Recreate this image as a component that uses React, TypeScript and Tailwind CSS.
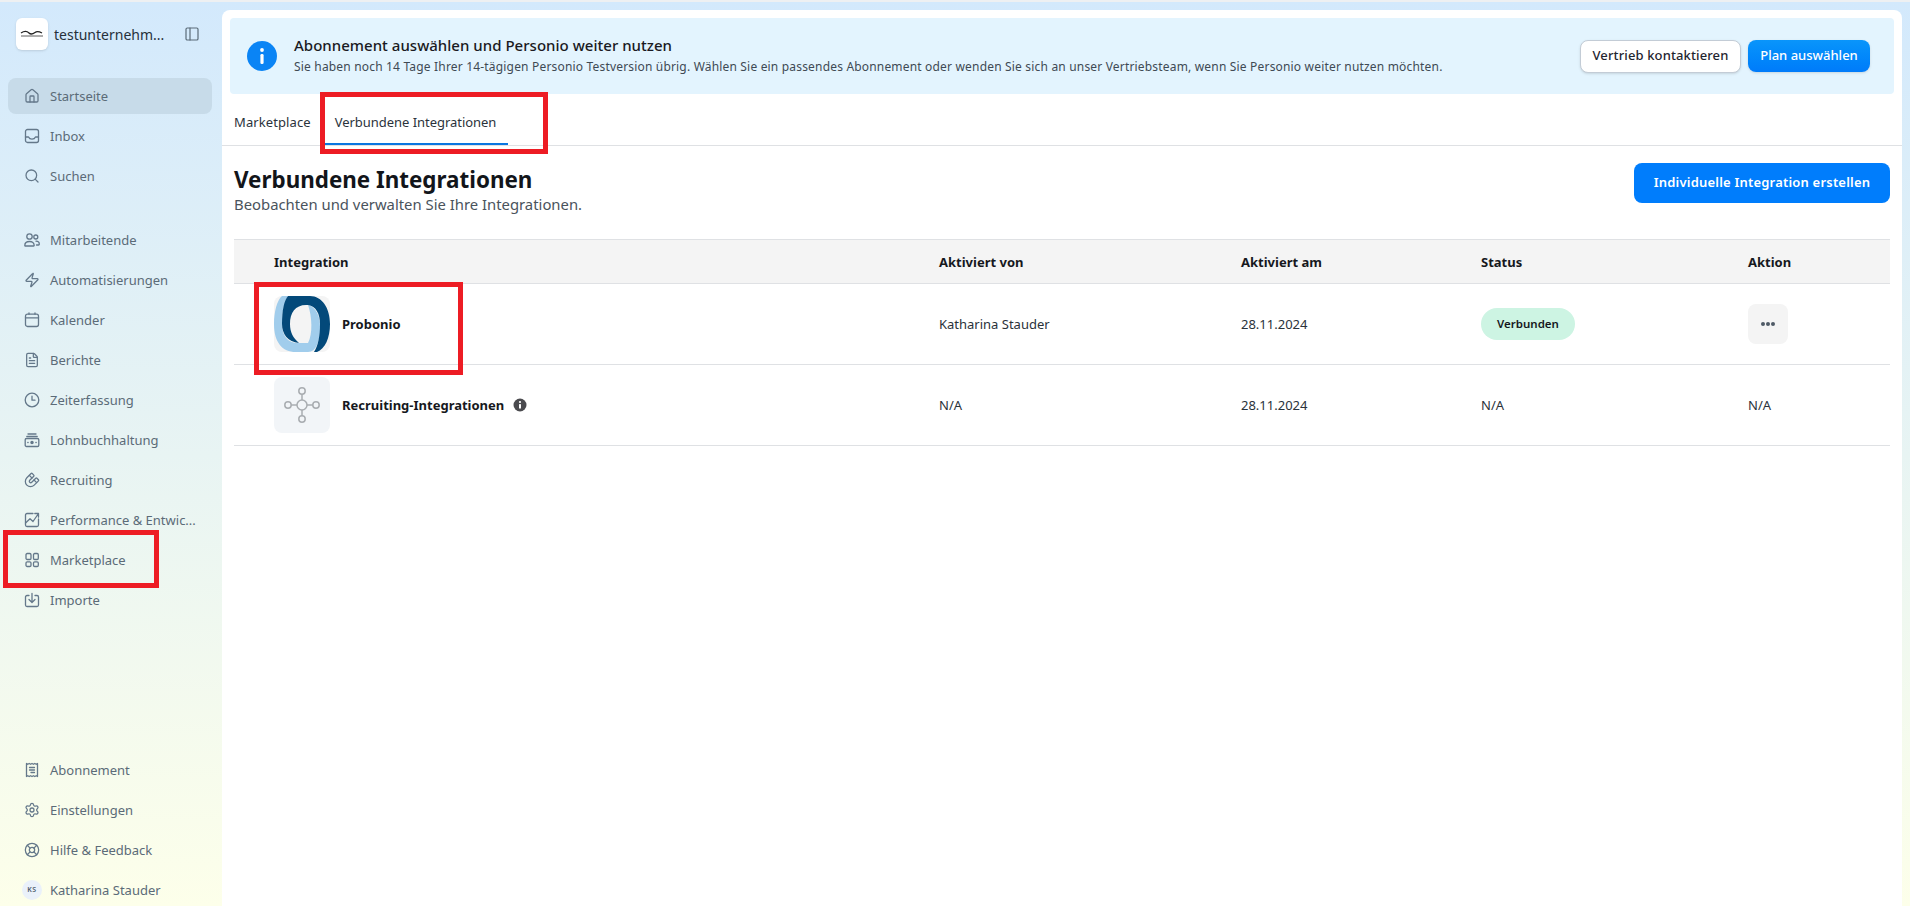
import { House, Search, Zap, FileText, Settings, LifeBuoy, PanelLeft, Magnet } from "lucide-react";
import type { ReactNode } from "react";

const ic = "w-[16px] h-[16px] shrink-0";
const svgProps = { viewBox: "0 0 16 16", fill: "none", stroke: "currentColor", strokeWidth: 1.3, strokeLinecap: "round" as const, strokeLinejoin: "round" as const, className: ic };

const InboxI = () => (<svg {...svgProps}><rect x="1.5" y="1.5" width="13" height="13" rx="2" /><path d="M1.5 9h3c.6 1.4 2 2.2 3.5 2.2s2.900-.8 3.500-2.200h3" /></svg>);
const UsersI = () => (<svg {...svgProps}><circle cx="5.5" cy="4.5" r="2.7" /><circle cx="11.8" cy="5" r="2" /><path d="M.8 13.5c0-2.600 2-4 4.700-4s4.700 1.400 4.700 4c0 .4-.3.5-.6.5H1.400c-.3 0-.6-.1-.6-.5zM12 9.200c2 0 3.300 1.200 3.300 3 0 .5-.3.8-.8.8h-2" /></svg>);
const CalI = () => (<svg {...svgProps}><rect x="1.5" y="2.2" width="13" height="12.3" rx="2" /><path d="M1.5 5.800h13M5 1v1.200M11 1v1.200" /></svg>);
const ClockI = () => (<svg {...svgProps}><circle cx="8" cy="8" r="6.8" /><path d="M8 4.200V8.200h3" /></svg>);
const PayI = () => (<svg {...svgProps}><rect x="1.2" y="6.5" width="13.6" height="8" rx="1.3" /><path d="M2.800 4.500h10.400M4 2h8" /><circle cx="8" cy="10.5" r="1.1" fill="currentColor" /><path d="M3.800 10.500h.3M11.900 10.500h.3" /></svg>);
const PerfI = () => (<svg {...svgProps}><path d="M9 1.500H3A1.500 1.500 0 0 0 1.500 3v10A1.500 1.500 0 0 0 3 14.500h10a1.500 1.500 0 0 0 1.500-1.500V7" /><path d="M1.500 11 6 6.800 9 9.500 14.500 1.500M10.800 1.500h3.700v3.700" /></svg>);
const GridI = () => (<svg {...svgProps}><rect x="2" y="1.5" width="5" height="6" rx="1.2" /><rect x="9.5" y="1.5" width="4.8" height="6" rx="1.2" /><rect x="2" y="9.8" width="5" height="4.7" rx="1.2" /><rect x="9.5" y="9.8" width="4.8" height="4.7" rx="1.2" /></svg>);
const ImportI = () => (<svg {...svgProps}><path d="M5 3.500H3A1.500 1.500 0 0 0 1.500 5v8A1.500 1.500 0 0 0 3 14.500h10a1.500 1.500 0 0 0 1.500-1.500V5A1.500 1.500 0 0 0 13 3.500h-2" /><path d="M8 1.500v8.500M5 7.500 8 10.500l3-3" /></svg>);
const ReceiptI = () => (<svg {...svgProps}><path d="M2.500 1.500l1.300.8 1.400-.8 1.400.8 1.400-.8 1.400.8 1.400-.8 1.400.8 1.300-.8v13l-1.300-.8-1.400.8-1.400-.8-1.400.8-1.400-.8-1.400.8-1.400-.8-1.300.8z" /><path d="M5.500 5.500h5M5.500 8h5M7 10.500h3.500" /></svg>);

function Row({ icon, label, active }: { icon: ReactNode; label: string; active?: boolean }) {
  return (
    <div className={`flex items-center h-9 pl-[16px] pr-2 gap-[10px] rounded-lg text-[#5b6b78] text-[13px] ${active ? "bg-[#c7dbe9]" : ""}`}>
      <span className="text-[#64788a] flex">{icon}</span>
      <span className="whitespace-nowrap pt-[2px]">{label}</span>
    </div>
  );
}

const cols = "grid grid-cols-[40px_665px_302px_240px_267px_1fr] items-center";

export default function App() {
  return (
    <div className="relative flex h-screen w-full overflow-hidden border-t-[2px] border-[#eef0f2] bg-gradient-to-b from-[#d3e9fc] via-[#e8f4f3] to-[#fdffea] font-['Noto_Sans',sans-serif] text-[#1a1a22]">
      <aside className="w-[222px] shrink-0 flex flex-col pt-4 pl-2 pr-[10px]">
        <div className="flex items-center h-8 pl-2">
          <div className="w-8 h-8 rounded-md bg-white shadow-sm flex items-center justify-center shrink-0">
            <svg viewBox="0 0 24 8" className="w-[24px] h-[8px]"><path d="M1 3c3-2 6-2 8 0s4 1 6-.5 4-1 7 .5" stroke="#222" strokeWidth="1.3" fill="none" /><path d="M1 6h22" stroke="#333" strokeWidth="0.8" /></svg>
          </div>
          <span className="ml-[6px] text-[14px] text-[#26303a] w-[122px] whitespace-nowrap">testunternehm...</span>
          <PanelLeft className="ml-[8px] w-4 h-4 text-[#5b6b78]" strokeWidth={1.8} />
        </div>

        <div className="mt-7 flex flex-col gap-1">
          <Row active icon={<House className={ic} strokeWidth={1.9} />} label="Startseite" />
          <Row icon={<InboxI />} label="Inbox" />
          <Row icon={<Search className={ic} strokeWidth={1.9} />} label="Suchen" />
        </div>

        <div className="mt-7 flex flex-col gap-1">
          <Row icon={<UsersI />} label="Mitarbeitende" />
          <Row icon={<Zap className={ic} strokeWidth={1.9} />} label="Automatisierungen" />
          <Row icon={<CalI />} label="Kalender" />
          <Row icon={<FileText className={ic} strokeWidth={1.9} />} label="Berichte" />
          <Row icon={<ClockI />} label="Zeiterfassung" />
          <Row icon={<PayI />} label="Lohnbuchhaltung" />
          <Row icon={<Magnet className={`${ic} rotate-180`} strokeWidth={1.9} />} label="Recruiting" />
          <Row icon={<PerfI />} label="Performance & Entwic..." />
          <Row icon={<GridI />} label="Marketplace" />
          <Row icon={<ImportI />} label="Importe" />
        </div>

        <div className="mt-auto -mb-[2px] flex flex-col gap-1">
          <Row icon={<ReceiptI />} label="Abonnement" />
          <Row icon={<Settings className={ic} strokeWidth={1.9} />} label="Einstellungen" />
          <Row icon={<LifeBuoy className={ic} strokeWidth={1.9} />} label="Hilfe & Feedback" />
          <Row icon={<span className="-ml-[2px] -mr-[2px] w-5 h-5 rounded-full bg-[#eaf1fa] flex items-center justify-center text-[7px] font-semibold text-[#4a5a68] tracking-[0.5px]">KS</span>} label="Katharina Stauder" />
        </div>
      </aside>

      <main className="flex-1 mt-2 mr-2 bg-white rounded-t-lg flex flex-col min-w-0">
        <section className="mx-2 mt-2 h-[76px] shrink-0 rounded bg-[#e3f4fe] flex items-center pl-[17px] pr-6">
          <svg viewBox="0 0 30 30" className="w-[30px] h-[30px] shrink-0">
            <circle cx="15" cy="15" r="15" fill="#0a84f5" />
            <circle cx="15" cy="9" r="1.9" fill="#fff" />
            <rect x="13.4" y="13" width="3.2" height="10" rx="1.3" fill="#fff" />
          </svg>
          <div className="ml-[17px] flex-1 min-w-0">
            <div className="text-[15px] font-medium leading-[22px] text-[#1a1a22] -mt-[2px] tracking-[0.02px]">Abonnement auswählen und Personio weiter nutzen</div>
            <div className="text-[12px] leading-[18px] mt-[2px] text-[#404a54] tracking-[0.18px] whitespace-nowrap">Sie haben noch 14 Tage Ihrer 14-tägigen Personio Testversion übrig. Wählen Sie ein passendes Abonnement oder wenden Sie sich an unser Vertriebsteam, wenn Sie Personio weiter nutzen möchten.</div>
          </div>
          <button className="h-[33px] w-[161px] shrink-0 rounded-lg bg-white border border-[#c3ccd6] text-[13px] font-medium text-[#1f2530] tracking-[0.12px] shadow-sm">Vertrieb kontaktieren</button>
          <button className="ml-[7px] h-[32px] w-[122px] shrink-0 rounded-lg bg-gradient-to-b from-[#0a95fb] to-[#007bfa] text-white text-[13px] font-medium shadow-sm">Plan auswählen</button>
        </section>

        <nav className="h-[52px] shrink-0 border-b border-[#dfe1e4] flex pl-3 text-[13px] text-[#2b333c]">
          <div className="h-full flex items-center pt-[6px] whitespace-nowrap tracking-[0.1px]">Marketplace</div>
          <div className="relative h-full ml-[13px] w-[184px] pl-[11px] flex items-center pt-[6px] whitespace-nowrap tracking-[-0.04px]">
            Verbundene Integrationen
            <div className="absolute left-0 right-0 bottom-0 h-[2px] bg-[#0b76e0]" />
          </div>
        </nav>

        <div className="mx-3 mt-[18px] flex items-start justify-between">
          <div>
            <h1 className="text-[22.4px] font-bold leading-[32px] text-[#12151a]">Verbundene Integrationen</h1>
            <p className="text-[14.85px] leading-[20px] text-[#4a535c] -mt-[2px]">Beobachten und verwalten Sie Ihre Integrationen.</p>
          </div>
          <button className="-mt-px h-10 w-[256px] rounded-lg bg-[#007dfc] text-white text-[13px] font-semibold tracking-[0.2px]">Individuelle Integration erstellen</button>
        </div>

        <div className="mx-3 mt-[25px] text-[13px] text-[#2a323a]">
          <div className={`${cols} h-[45px] pt-[2px] bg-[#f4f4f4] border-y border-[#dfe1e4] font-bold text-[#16181d]`}>
            <span /><span>Integration</span><span>Aktiviert von</span><span>Aktiviert am</span><span>Status</span><span>Aktion</span>
          </div>
          <div className={`${cols} h-[81px] border-b border-[#dfe1e4]`}>
            <span />
            <div className="flex items-center gap-3">
              <div className="w-14 h-14 rounded-lg bg-[#f4f4f4] flex items-center justify-center overflow-hidden">
                <svg viewBox="0 0 56 56" className="w-14 h-14">
                  <path d="M8 0C3 4 0 16 0 28C0 46 8 56 22 56H34C42 56 46 46 46 30C46 20 42 11 34 9C38 20 39 38 34 47H24C14 47 8 40 8 28C8 16 10 6 14 0Z" fill="#a1cdec" />
                  <path d="M14 0H36C48 0 56 12 56 28C56 42 51 53 43 56H40C44 50 46 40 46 28C46 18 42 10 34 9C22 8 16 16 16 28C16 36 19 42 25 47C14 46 8 38 8 28C8 14 10 5 14 0Z" fill="#03497a" />
                </svg>
              </div>
              <span className="font-bold text-[#16181d] pt-[2px]">Probonio</span>
            </div>
            <span className="pt-[2px]">Katharina Stauder</span>
            <span className="pt-[2px]">28.11.2024</span>
            <span className="h-8 w-[94px] rounded-full bg-[#cdf4e3] flex items-center justify-center text-[11.5px] font-semibold text-[#16181d]">Verbunden</span>
            <span className="w-10 h-10 rounded-lg bg-[#f4f4f4] flex items-center justify-center gap-[1.5px]">
              <i className="w-[3.5px] h-[3.5px] rounded-full bg-[#4f5a66]" /><i className="w-[3.5px] h-[3.5px] rounded-full bg-[#4f5a66]" /><i className="w-[3.5px] h-[3.5px] rounded-full bg-[#4f5a66]" />
            </span>
          </div>
          <div className={`${cols} h-[81px] border-b border-[#dfe1e4]`}>
            <span />
            <div className="flex items-center gap-3">
              <div className="w-14 h-14 rounded-lg bg-[#f2f5f8] flex items-center justify-center">
                <svg viewBox="0 0 56 56" className="w-14 h-14" fill="none" stroke="#a9adb1" strokeWidth="1.5">
                  <circle cx="28" cy="28" r="5" /><circle cx="28" cy="14" r="3.2" /><circle cx="28" cy="42" r="3.2" /><circle cx="14" cy="28" r="3.2" /><circle cx="42" cy="28" r="3.2" />
                  <path d="M28 17v6M28 33v6M17 28h6M33 28h6" />
                </svg>
              </div>
              <span className="font-bold text-[#16181d] pt-[2px]">Recruiting-Integrationen</span>
              <svg viewBox="0 0 14 14" className="w-[14px] h-[14px] -ml-[3px]"><circle cx="7" cy="7" r="6.5" fill="#4a4a4e" /><circle cx="7" cy="4" r="1.1" fill="#fff" /><rect x="6" y="6" width="2" height="4.5" rx="0.6" fill="#fff" /></svg>
            </div>
            <span className="pt-[2px]">N/A</span>
            <span className="pt-[2px]">28.11.2024</span>
            <span className="pt-[2px]">N/A</span>
            <span className="pt-[2px]">N/A</span>
          </div>
        </div>
      </main>

      <div className="absolute left-[3px] top-[528px] w-[156px] h-[58px] border-[5px] border-[#ed1c24] pointer-events-none" />
      <div className="absolute left-[320px] top-[90px] w-[228px] h-[62px] border-[5px] border-[#ed1c24] pointer-events-none" />
      <div className="absolute left-[254px] top-[280px] w-[209px] h-[93px] border-[5px] border-[#ed1c24] pointer-events-none" />
    </div>
  );
}
